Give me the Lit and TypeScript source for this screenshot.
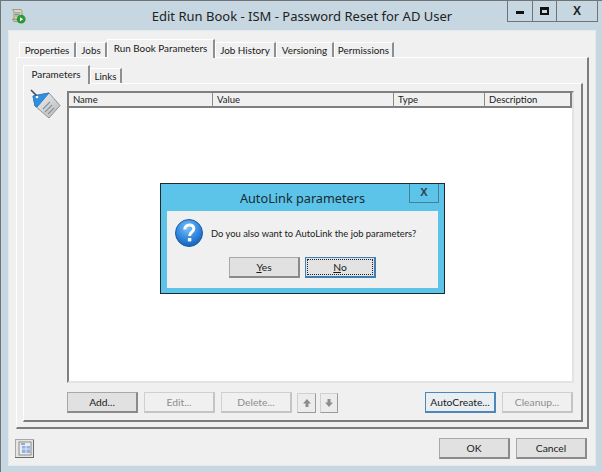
import { LitElement, html, css, svg } from "lit";
import { customElement } from "lit/decorators.js";

const outerTabs = [
  { label: "Properties", w: 57 },
  { label: "Jobs", w: 31 },
  { label: "Run Book Parameters", w: 108, active: true },
  { label: "Job History", w: 61 },
  { label: "Versioning", w: 58 },
  { label: "Permissions", w: 60 },
];
const innerTabs = [
  { label: "Parameters", w: 67, active: true },
  { label: "Links", w: 32 },
];
const columns = ["Name", "Value", "Type", "Description"];

const bookIcon = svg`<svg class="ico" width="16" height="16" viewBox="0 0 20 20">
  <path d="M3 2h11l1 2v10H5V4z" fill="#e3dcb8" stroke="#8d8a68"/>
  <path d="M6 6h7M6 8h6M6 10h5" stroke="#5f7f9f"/>
  <path d="M3 14h9v3H5z" fill="#cfc79c" stroke="#8d8a68"/>
  <circle cx="14" cy="14" r="5.500" fill="#2b9a35"/>
  <path d="M12.500 11.500l4 2.500-4 2.500z" fill="#fff"/>
</svg>`;

const tagIcon = svg`<svg class="ico" width="32" height="32" viewBox="0 0 32 32">
  <defs>
    <linearGradient id="tg" x1="0" y1="0" x2="1" y2="1">
      <stop offset="0" stop-color="#f2f3f4"/><stop offset="1" stop-color="#b4b7bb"/>
    </linearGradient>
  </defs>
  <path d="M3 7L19 4 30 16.500 19 29 5 17z" fill="url(#tg)" stroke="#8e9297"/>
  <path d="M3 7L19 4 7 18 5 17z" fill="#2f8fe0" stroke="#2f7cc6"/>
  <path d="M13 20l7-7M15 23l7-7M18 25l6-6" stroke="#8e9297" stroke-width="1.200"/>
  <path d="M1 1l6 6" stroke="#33475f" stroke-width="1.500"/>
  <circle cx="7" cy="8" r="1.300" fill="#fff"/>
</svg>`;

const questionIcon = svg`<svg class="ico" width="28" height="28" viewBox="0 0 28 28">
  <defs>
    <radialGradient id="q" cx="45%" cy="30%" r="75%">
      <stop offset="0" stop-color="#7cc2f5"/><stop offset="0.600" stop-color="#2d84dc"/><stop offset="1" stop-color="#1558ad"/>
    </radialGradient>
  </defs>
  <circle cx="14" cy="14" r="13.500" fill="url(#q)" stroke="#1c5fa8"/>
  <path d="M9.800 10.500c0-6 9-6 9-.8 0 3.600-4.200 3.400-4.200 7.300" fill="none" stroke="#fff" stroke-width="3"/>
  <rect x="12.900" y="19" width="3.400" height="3.400" fill="#fff"/>
</svg>`;

const footIcon = svg`<svg class="ico" width="19" height="19" viewBox="0 0 19 19">
  <rect x="0.500" y="0.500" width="18" height="18" fill="#e6e6e6" stroke="#a8a8a8"/>
  <path d="M0 18.500h19M18.500 1v18" stroke="#6a6a6a"/>
  <rect x="4" y="3" width="12" height="13" fill="#ececec" stroke="#8a8a8a"/>
  <path d="M6 5h4" stroke="#3b6fb0"/>
  <rect x="7" y="7" width="8" height="7" fill="#8fb2e2"/>
  <path d="M7 10h8M11 7v7" stroke="#dfe9f7"/>
</svg>`;

const arrowUp = svg`<svg class="ico" width="10" height="10" viewBox="0 0 10 10"><path d="M5 1L1 5.500h2.500V9h3V5.500H9z" fill="#8c8c8c"/></svg>`;
const arrowDown = svg`<svg class="ico" width="10" height="10" viewBox="0 0 10 10"><path d="M5 9L1 4.500h2.500V1h3v3.500H9z" fill="#8c8c8c"/></svg>`;

@customElement("app-root")
export class AppRoot extends LitElement {
  static styles = css`
    :host {
      display: block;
      width: 602px;
      height: 472px;
      position: relative;
      overflow: hidden;
      box-sizing: border-box;
      background: #c6d7e1;
      border: 1px solid #6f7478;
      border-bottom: 0;
      border-right: 0;
      font-family: "Lato", "Liberation Sans", sans-serif;
      font-size: 10.300px;
      color: #1a1a1a;
    }
    * { box-sizing: border-box; }
    .ico { display: block; flex: none; }
    .titlebar {
      height: 29px;
      display: grid;
      grid-template-columns: 1fr auto;
      position: relative;
    }
    .appicon { position: absolute; left: 9px; top: 7px; }
    .title {
      font-family: "Noto Sans", "Open Sans", sans-serif;
      font-size: 13px;
      line-height: 30px;
      text-align: center;
      margin-right: -96px;
      color: #222;
    }
    .winctl {
      display: flex;
      height: 21px;
      margin-right: 4px;
      border: 1px solid #6f7478;
      border-top: 0;
      background: #c6d7e1;
    }
    .winctl div {
      display: flex;
      align-items: center;
      justify-content: center;
      border-right: 1px solid #6f7478;
    }
    .winctl div:last-child { border-right: 0; }
    .min { width: 25px; }
    .max { width: 24px; }
    .cls { width: 40px; }
    .min i { width: 8px; height: 3px; background: #111; display: block; margin-top: 3px; }
    .max i { width: 9px; height: 8px; border: 2px solid #111; border-top-width: 3px; display: block; }
    .x { font: bold 12px "Liberation Sans", sans-serif; color: #222; }
    .client {
      margin-left: 7px;
      width: 588px;
      height: 436px;
      background: #f0f0f0;
      padding: 8px 7px 0;
      border: 1px solid #e4e9ec;
      display: flex;
      flex-direction: column;
    }
    .tabs { display: flex; align-items: flex-end; padding-left: 3px; height: 18px; position: relative; z-index: 1; }
    .tabs.inner { padding-left: 0; }
    .tab {
      height: 15px;
      line-height: 14px;
      text-align: center;
      flex: none;
      border-right: 2px solid #8f8f8f;
      border-top: 1px solid #fff;
      border-left: 1px solid #fff;
      white-space: nowrap;
      font-size: 9.900px;
    }
    .tab.active {
      height: 19px;
      line-height: 17px;
      background: #f0f0f0;
      margin-bottom: -1px;
      margin-top: -4px;
    }
    .panel {
      width: 573px;
      height: 372px;
      border: 1px solid #fff;
      border-right: 2px solid #7d7d7d;
      border-bottom: 2px solid #7d7d7d;
      padding: 7px 6px 0;
      display: flex;
      flex-direction: column;
    }
    .panel.inner-panel {
      width: 560px;
      height: 339px;
      padding: 7px 8px 0 44px;
      position: relative;
    }
    .tag { position: absolute; left: 6px; top: 5px; }
    .list {
      width: 507px;
      height: 292px;
      background: #fff;
      margin-left: -1px;
      border: 2px solid #7f7f7f;
      border-right-color: #e4e4e4;
      border-bottom-color: #e4e4e4;
    }
    .head {
      display: grid;
      grid-template-columns: 144px 181px 91px 1fr;
      height: 15px;
      background: #f0f0f0;
      border-bottom: 2px solid #7f7f7f;
      border-right: 2px solid #7f7f7f;
    }
    .head div {
      line-height: 14px;
      padding-left: 4px;
      border-right: 1px solid #8a8a8a;
      font-size: 9.500px;
    }
    .head div:last-child { border-right: 0; }
    .actions { display: flex; margin: 9px 0 0 -1px; align-items: center; }
    .btn {
      width: 71px;
      height: 21px;
      background: #e1e1e1;
      line-height: 19px;
      text-align: center;
      flex: none;
      border-style: solid;
      border-width: 1px 2px 2px 1px;
      border-color: #a8a8a8 #8a8a8a #8a8a8a #a8a8a8;
    }
    .btn.off {
      background: #f0f0f0;
      color: #8e8e8e;
      border-color: #d0d0d0 #c4c4c4 #c4c4c4 #d0d0d0;
    }
    .btn.focus { border-color: #4f86b8; background: #e8eef2; }
    .gap6 { margin-left: 6px; }
    .arrow {
      width: 19px;
      height: 20px;
      margin-left: 5px;
      display: flex;
      align-items: center;
      justify-content: center;
      background: #ececec;
      border: 1px solid #d0d0d0;
      border-right-color: #9a9a9a;
      border-bottom-color: #9a9a9a;
    }
    .arrow + .arrow { margin-left: 4px; width: 18px; }
    .spacer { flex: 1; }
    .footer {
      display: flex;
      align-items: center;
      margin-top: 9px;
      padding-right: 1px;
      gap: 6px;
    }
    .footicon { margin-left: -1px; }
    .dialog {
      position: absolute;
      left: 159px;
      top: 182px;
      width: 285px;
      height: 111px;
      background: #5cc4e8;
      border: 1px solid #1f2a30;
      padding: 0 6px 5px;
      display: flex;
      flex-direction: column;
      z-index: 5;
    }
    .dlg-title {
      height: 27px;
      flex: none;
      position: relative;
      text-align: center;
      font-family: "Noto Sans", "Open Sans", sans-serif;
      font-size: 12.700px;
      line-height: 28px;
      color: #1b2a33;
    }
    .dlg-x {
      position: absolute;
      right: -1px;
      top: 0;
      width: 30px;
      height: 19px;
      border: 1px solid #4b7f95;
      border-top: 0;
      line-height: 17px;
      text-align: center;
      font-weight: bold;
      font-size: 11px;
      font-family: "Liberation Sans", sans-serif;
      color: #2c4350;
    }
    .dlg-body {
      flex: 1;
      background: #f0f0f0;
      padding: 8px 0 0 8px;
    }
    .dlg-msg { display: flex; align-items: center; gap: 8px; height: 28px; font-size: 9.400px; white-space: nowrap; }
    .dlg-btns { display: flex; gap: 5px; margin-top: 10px; padding-left: 54px; }
    .btn.dot { position: relative; border-color: #3f7fb5; background: #e3e3e3; }
    .btn.dot::after {
      content: "";
      position: absolute;
      inset: 1px;
      border: 1px dotted #222;
    }
    u { text-decoration: underline; }
  `;

  render() {
    return html`
      <div class="titlebar">
        <div class="appicon">${bookIcon}</div>
        <div class="title">Edit Run Book - ISM - Password Reset for AD User</div>
        <div class="winctl">
          <div class="min"><i></i></div>
          <div class="max"><i></i></div>
          <div class="cls"><span class="x">X</span></div>
        </div>
      </div>
      <div class="client">
        <div class="tabs">
          ${outerTabs.map(
            (t) => html`<div class="tab ${t.active ? "active" : ""}" style="width:${t.w}px">${t.label}</div>`
          )}
        </div>
        <div class="panel">
          <div class="tabs inner">
            ${innerTabs.map(
              (t) => html`<div class="tab ${t.active ? "active" : ""}" style="width:${t.w}px">${t.label}</div>`
            )}
          </div>
          <div class="panel inner-panel">
            <div class="tag">${tagIcon}</div>
            <div class="list">
              <div class="head">${columns.map((c) => html`<div>${c}</div>`)}</div>
            </div>
            <div class="actions">
              <div class="btn">Add...</div>
              <div class="btn off gap6">Edit...</div>
              <div class="btn off gap6">Delete...</div>
              <div class="arrow">${arrowUp}</div>
              <div class="arrow">${arrowDown}</div>
              <div class="spacer"></div>
              <div class="btn focus">AutoCreate...</div>
              <div class="btn off gap6">Cleanup...</div>
            </div>
          </div>
        </div>
        <div class="footer">
          <div class="footicon">${footIcon}</div>
          <div class="spacer"></div>
          <div class="btn">OK</div>
          <div class="btn">Cancel</div>
        </div>
      </div>
      <div class="dialog">
        <div class="dlg-title">AutoLink parameters<div class="dlg-x">X</div></div>
        <div class="dlg-body">
          <div class="dlg-msg">${questionIcon}<span>Do you also want to AutoLink the job parameters?</span></div>
          <div class="dlg-btns">
            <div class="btn"><u>Y</u>es</div>
            <div class="btn dot"><u>N</u>o</div>
          </div>
        </div>
      </div>
    `;
  }
}
